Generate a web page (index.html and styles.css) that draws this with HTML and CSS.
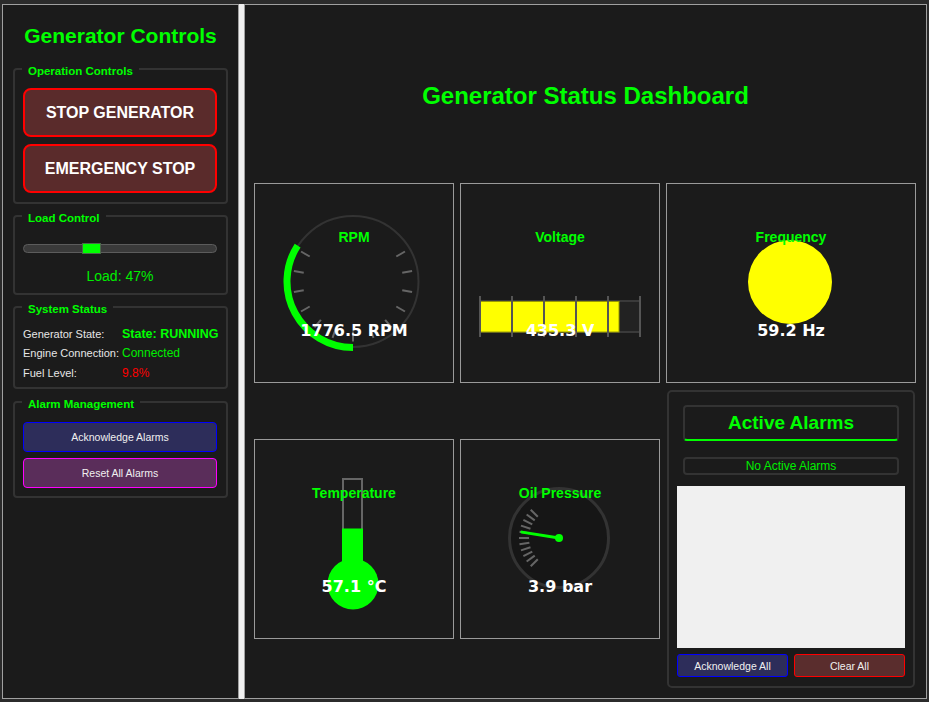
FILE: index.html
```html
<!DOCTYPE html>
<html lang="en">
<head>
<meta charset="utf-8">
<title>Generator Control Panel</title>
<link rel="stylesheet" href="styles.css">
</head>
<body>
<div class="window">
  <aside class="left">
    <h1 class="left-title">Generator Controls</h1>

    <section class="group g-op">
      <div class="group-title">Operation Controls</div>
      <button class="big-btn">STOP GENERATOR</button>
      <button class="big-btn">EMERGENCY STOP</button>
    </section>

    <section class="group g-load">
      <div class="group-title">Load Control</div>
      <div class="slider">
        <div class="groove"><div class="handle" style="margin-left:58px"></div></div>
      </div>
      <div class="load-text">Load: 47%</div>
    </section>

    <section class="group g-status">
      <div class="group-title">System Status</div>
      <div class="status-grid">
        <span class="s-label">Generator State:</span><span class="s-state">State: RUNNING</span>
        <span class="s-label">Engine Connection:</span><span class="s-ok">Connected</span>
        <span class="s-label">Fuel Level:</span><span class="s-bad">9.8%</span>
      </div>
    </section>

    <section class="group g-alarm">
      <div class="group-title">Alarm Management</div>
      <button class="sm-btn btn-blue">Acknowledge Alarms</button>
      <button class="sm-btn btn-pink">Reset All Alarms</button>
    </section>
  </aside>

  <div class="splitter"></div>

  <main class="right">
    <h2 class="dash-title">Generator Status Dashboard</h2>
    <div class="grid">
      <div class="card">
        <svg class="gfx" viewBox="1 1 198 198">
          <circle cx="99" cy="98.5" r="65.5" fill="none" stroke="#333" stroke-width="2"/>
          <g stroke="#666" stroke-width="2">
            <line x1="55.70" y1="73.5" x2="47.04" y2="68.5"/>
            <line x1="49.76" y1="89.82" x2="39.91" y2="88.08"/>
            <line x1="49.76" y1="107.18" x2="39.91" y2="108.92"/>
            <line x1="55.70" y1="123.5" x2="47.04" y2="128.5"/>
            <line x1="66.86" y1="136.80" x2="60.43" y2="144.46"/>
            <line x1="81.90" y1="145.48" x2="78.48" y2="154.88"/>
            <line x1="99" y1="148.5" x2="99" y2="158.5"/>
            <line x1="116.10" y1="145.48" x2="119.52" y2="154.88"/>
            <line x1="131.14" y1="136.80" x2="137.57" y2="144.46"/>
            <line x1="142.30" y1="123.5" x2="150.96" y2="128.5"/>
            <line x1="148.24" y1="107.18" x2="158.09" y2="108.92"/>
            <line x1="148.24" y1="89.82" x2="158.09" y2="88.08"/>
            <line x1="142.30" y1="73.5" x2="150.96" y2="68.5"/>
          </g>
          <path d="M 99 164.5 A 66 66 0 0 1 43.65 62.55" fill="none" stroke="#00ff00" stroke-width="7"/>
        </svg>
        <div class="labels"><div class="g-title">RPM</div><div class="g-value">1776.5 RPM</div></div>
      </div>

      <div class="card">
        <svg class="gfx" viewBox="1 1 198 198">
          <rect x="20" y="118" width="160" height="31" fill="#222" stroke="#3a3a3a" stroke-width="2"/>
          <rect x="20.5" y="118.5" width="138.5" height="30.5" fill="#ffff00" stroke="#9a9a00" stroke-width="1"/>
          <g stroke="#555" stroke-width="2">
            <line x1="20" y1="113" x2="20" y2="154"/>
            <line x1="52" y1="113" x2="52" y2="154"/>
            <line x1="84" y1="113" x2="84" y2="154"/>
            <line x1="116" y1="113" x2="116" y2="154"/>
            <line x1="148" y1="113" x2="148" y2="154"/>
            <line x1="180" y1="113" x2="180" y2="154"/>
          </g>
        </svg>
        <div class="labels"><div class="g-title">Voltage</div><div class="g-value">435.3 V</div></div>
      </div>

      <div class="card card-wide">
        <svg class="gfx" viewBox="1 1 248 198">
          <circle cx="124" cy="99" r="42" fill="#ffff00"/>
        </svg>
        <div class="labels"><div class="g-title">Frequency</div><div class="g-value">59.2 Hz</div></div>
      </div>

      <div class="card card-low">
        <svg class="gfx" viewBox="1 1 198 198">
          <rect x="89" y="40" width="19" height="81" fill="none" stroke="#666" stroke-width="2"/>
          <rect x="88" y="89.5" width="21" height="33" fill="#00ff00"/>
          <circle cx="99" cy="145" r="25.5" fill="#00ff00"/>
        </svg>
        <div class="labels"><div class="g-title">Temperature</div><div class="g-value">57.1 °C</div></div>
      </div>

      <div class="card card-low">
        <svg class="gfx" viewBox="1 1 198 198">
          <circle cx="99" cy="99" r="49.5" fill="#161616" stroke="#333" stroke-width="3"/>
          <g stroke="#666" stroke-width="2">
            <line x1="77.79" y1="77.79" x2="70.72" y2="70.72"/>
            <line x1="74.73" y1="81.37" x2="66.64" y2="75.49"/>
            <line x1="72.27" y1="85.38" x2="63.36" y2="80.84"/>
            <line x1="70.47" y1="89.73" x2="60.96" y2="86.64"/>
            <line x1="69.37" y1="94.31" x2="59.49" y2="92.74"/>
            <line x1="69" y1="99" x2="59" y2="99"/>
            <line x1="69.37" y1="103.69" x2="59.49" y2="105.26"/>
            <line x1="70.47" y1="108.27" x2="60.96" y2="111.36"/>
            <line x1="72.27" y1="112.62" x2="63.36" y2="117.16"/>
            <line x1="74.73" y1="116.63" x2="66.64" y2="122.51"/>
            <line x1="77.79" y1="120.21" x2="70.72" y2="127.28"/>
          </g>
          <line x1="99" y1="99" x2="61.96" y2="93.13" stroke="#00ff00" stroke-width="3" stroke-linecap="round"/>
          <circle cx="99" cy="99" r="4" fill="#00ff00"/>
        </svg>
        <div class="labels"><div class="g-title">Oil Pressure</div><div class="g-value">3.9 bar</div></div>
      </div>

      <div class="alarm-panel">
        <div class="alarm-head">Active Alarms</div>
        <div class="alarm-status">No Active Alarms</div>
        <div class="alarm-list"></div>
        <div class="alarm-btns">
          <button class="al-btn btn-blue">Acknowledge All</button>
          <button class="al-btn btn-red">Clear All</button>
        </div>
      </div>
    </div>
  </main>
</div>
</body>
</html>
```

FILE: styles.css
```css
* { box-sizing: border-box; }

html, body {
  margin: 0;
  padding: 0;
  background: #2b2b2b;
  font-family: "Liberation Sans", Arial, sans-serif;
}

.window {
  display: flex;
  width: 929px;
  height: 702px;
  padding: 4px 2px 3px 2px;
}

/* ---------- left panel ---------- */
.left {
  width: 237px;
  flex-shrink: 0;
  background: #1b1b1b;
  border: 1px solid #a0a0a0;
  padding: 0 10px;
  display: flex;
  flex-direction: column;
}

.left-title {
  margin: 19px 0 20px;
  font: bold 21px/24px "Liberation Sans", sans-serif;
  color: #00ff00;
  text-align: center;
}

.group {
  border: 2px solid #333333;
  border-radius: 4px;
  padding: 0 9px 9px 8px;
}

.group + .group { margin-top: 11px; }
.g-alarm.group { margin-top: 12px; padding-bottom: 8px; }
.g-status.group { padding-bottom: 4px; }

.group-title {
  width: fit-content;
  margin: -5px 0 0 -1px;
  padding: 0 6px;
  background: #1b1b1b;
  font: bold 11.5px/13px "Liberation Sans", sans-serif;
  color: #00ff00;
  white-space: nowrap;
}

.big-btn {
  display: block;
  width: 100%;
  height: 49px;
  margin: 10px 0 0;
  padding: 0;
  border: 2px solid #ff0000;
  border-radius: 8px;
  background: #5a2b2b;
  color: #ffffff;
  font: bold 16px "Liberation Sans", sans-serif;
}

.big-btn + .big-btn { margin-top: 7px; }

.slider {
  height: 12px;
  margin-top: 17px;
  display: flex;
  align-items: center;
}

.groove {
  flex: 1;
  height: 9px;
  border: 1px solid #5c5c5c;
  border-radius: 5px;
  background: #3a3a3a;
  display: flex;
  align-items: center;
}

.handle {
  width: 19px;
  height: 11px;
  flex-shrink: 0;
  background: #00ff00;
  border: 1px solid #4a6a4a;
}

.load-text {
  margin-top: 14px;
  font: 14px/16px "Liberation Sans", sans-serif;
  color: #00ee00;
  text-align: center;
}

.status-grid {
  margin-top: 8px;
  margin-right: -4px;
  display: grid;
  grid-template-columns: 99px 1fr;
  grid-auto-rows: 19.5px;
  align-items: center;
  white-space: nowrap;
}

.s-label {
  font: 11px "Liberation Sans", sans-serif;
  color: #e6e6e6;
}

.s-state {
  font: bold 12.5px "Liberation Sans", sans-serif;
  color: #00ff00;
}

.s-ok {
  font: 12px "Liberation Sans", sans-serif;
  color: #00ee00;
}

.s-bad {
  font: 12px "Liberation Sans", sans-serif;
  color: #ff0000;
}

.sm-btn {
  display: block;
  width: 100%;
  height: 30px;
  margin: 11px 0 0;
  padding: 0;
  border-radius: 4px;
  color: #f0f0f0;
  font: 10.5px "Liberation Sans", sans-serif;
}

.sm-btn + .sm-btn { margin-top: 6px; }

.btn-blue { background: #2d2d5a; border: 1px solid #0000ff; }
.btn-pink { background: #5a2d5a; border: 1px solid #ff00ff; }
.btn-red { background: #5a2d2d; border: 1px solid #ff0000; }

/* ---------- splitter ---------- */
.splitter {
  width: 5px;
  flex-shrink: 0;
  background: #f0f0f0;
}

/* ---------- right panel ---------- */
.right {
  flex: 1;
  background: #1b1b1b;
  border: 1px solid #a0a0a0;
  padding: 9px;
  display: flex;
  flex-direction: column;
}

.dash-title {
  flex: 1;
  margin: 0 0 5px;
  display: flex;
  align-items: center;
  justify-content: center;
  font: bold 24px/28px "Liberation Sans", sans-serif;
  color: #00ff00;
}

.grid {
  display: grid;
  grid-template-columns: 200px 200px 250px;
  grid-template-rows: 200px 300px;
  gap: 6px;
}

.card {
  height: 200px;
  border: 1px solid #9a9a9a;
  display: grid;
}

.card-low { align-self: center; }

.card > * { grid-area: 1 / 1; }

.gfx {
  width: 100%;
  height: 100%;
  display: block;
}

.labels {
  display: flex;
  flex-direction: column;
  align-items: center;
}

.g-title {
  margin-top: 45px;
  font: bold 14px/16px "Liberation Sans", sans-serif;
  color: #00ff00;
}

.g-value {
  margin-top: 76px;
  font: bold 16px/20px "DejaVu Sans", sans-serif;
  color: #ffffff;
}

/* ---------- alarms ---------- */
.alarm-panel {
  margin: 1px;
  border: 2px solid #333333;
  border-radius: 5px;
  padding: 13px 8px 9px;
  display: flex;
  flex-direction: column;
}

.alarm-head {
  height: 36px;
  margin: 0 6px;
  border: 2px solid #333333;
  border-bottom-color: #00ff00;
  border-radius: 4px;
  display: flex;
  align-items: center;
  justify-content: center;
  font: bold 19px "Liberation Sans", sans-serif;
  color: #00ff00;
}

.alarm-status {
  height: 18px;
  margin: 16px 6px 0;
  border: 2px solid #333333;
  border-radius: 4px;
  display: flex;
  align-items: center;
  justify-content: center;
  font: 12px "Liberation Sans", sans-serif;
  color: #00ee00;
}

.alarm-list {
  flex: 1;
  margin-top: 11px;
  background: #f0f0f0;
}

.alarm-btns {
  display: flex;
  gap: 6px;
  height: 23px;
  margin-top: 6px;
}

.al-btn {
  flex: 1;
  padding: 0;
  border-radius: 3px;
  color: #f0f0f0;
  font: 10.5px "Liberation Sans", sans-serif;
}
```
